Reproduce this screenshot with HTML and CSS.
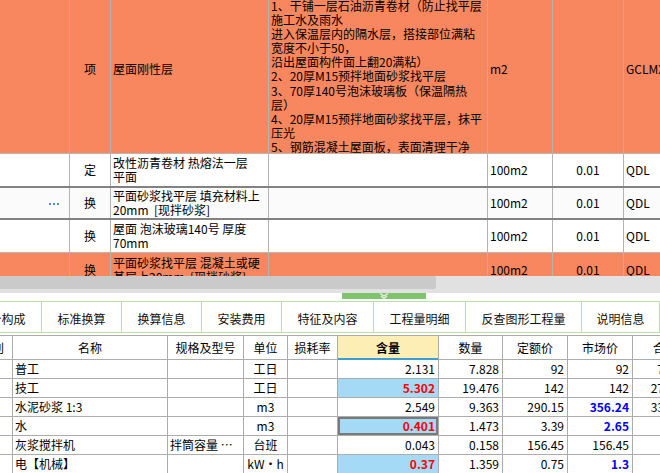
FILE: index.html
```html
<!DOCTYPE html>
<html lang="zh">
<head>
<meta charset="utf-8">
<title>清单组价</title>
<link rel="stylesheet" href="styles.css">
</head>
<body>
<div class="screen">
  <div class="top-grid">
    <div class="top-inner">
      <div class="trow r1 hl">
        <div class="c"></div>
        <div class="c ctr">项</div>
        <div class="c">屋面刚性层</div>
        <div class="c desc">1、干铺一层石油沥青卷材（防止找平层<br>施工水及雨水<br>进入保温层内的隔水层，搭接部位满粘<br>宽度不小于50，<br>沿出屋面构件面上翻20满粘）<br>2、20厚M15预拌地面砂浆找平层<br>3、70厚140号泡沫玻璃板（保温隔热<br>层）<br>4、20厚M15预拌地面砂浆找平层，抹平<br>压光<br>5、钢筋混凝土屋面板，表面清理干净</div>
        <div class="c">m2</div>
        <div class="c"></div>
        <div class="c">GCLMXH</div>
      </div>
      <div class="trow r2 thick">
        <div class="c"></div>
        <div class="c ctr">定</div>
        <div class="c">改性沥青卷材 热熔法一层<br>平面</div>
        <div class="c"></div>
        <div class="c">100m2</div>
        <div class="c ctr">0.01</div>
        <div class="c">QDL</div>
      </div>
      <div class="trow r3 thick alt">
        <div class="c end"><svg class="dots" width="10" height="2" viewBox="0 0 10 2"><rect x="0" y="0" width="2" height="2"/><rect x="4" y="0" width="2" height="2"/><rect x="8" y="0" width="2" height="2"/></svg></div>
        <div class="c ctr">换</div>
        <div class="c">平面砂浆找平层 填充材料上<br>20mm&nbsp;&nbsp;[现拌砂浆]</div>
        <div class="c"></div>
        <div class="c">100m2</div>
        <div class="c ctr">0.01</div>
        <div class="c">QDL</div>
      </div>
      <div class="trow r4">
        <div class="c"></div>
        <div class="c ctr">换</div>
        <div class="c">屋面 泡沫玻璃140号 厚度<br>70mm</div>
        <div class="c"></div>
        <div class="c">100m2</div>
        <div class="c ctr">0.01</div>
        <div class="c">QDL</div>
      </div>
      <div class="trow r5 hl">
        <div class="c"></div>
        <div class="c ctr">换</div>
        <div class="c">平面砂浆找平层 混凝土或硬<br>基层上20mm&nbsp;&nbsp;[现拌砂浆]</div>
        <div class="c"></div>
        <div class="c">100m2</div>
        <div class="c ctr">0.01</div>
        <div class="c">QDL</div>
      </div>
    </div>
  </div>

  <div class="hscroll"><div class="thumb"></div></div>

  <div class="splitter">
    <div class="grip">
      <svg width="10" height="6" viewBox="0 0 10 6"><polyline points="1,0.5 5,3 9,0.5" fill="none" stroke="#e8f5e2" stroke-width="1.2"/><polyline points="2,3 5,5.5 8,3" fill="none" stroke="#e8f5e2" stroke-width="1.2"/></svg>
    </div>
  </div>

  <div class="tabs-wrap">
    <div class="tabs">
      <div class="tab w80">单价构成</div>
      <div class="tab w80">标准换算</div>
      <div class="tab w80">换算信息</div>
      <div class="tab w80">安装费用</div>
      <div class="tab w92">特征及内容</div>
      <div class="tab w92">工程量明细</div>
      <div class="tab w116">反查图形工程量</div>
      <div class="tab w78">说明信息</div>
      <div class="tab w80">组价方案</div>
    </div>
  </div>

  <div class="bottom-grid">
    <div class="btable">
      <div class="brow bhead">
        <div class="b ctr">类别</div>
        <div class="b ctr">名称</div>
        <div class="b ctr">规格及型号</div>
        <div class="b ctr">单位</div>
        <div class="b ctr">损耗率</div>
        <div class="b ctr sorted">含量</div>
        <div class="b ctr">数量</div>
        <div class="b ctr">定额价</div>
        <div class="b ctr">市场价</div>
        <div class="b ctr">合价</div>
        <div class="b ctr">是否暂估</div>
      </div>
      <div class="brow">
        <div class="b ctr">人</div>
        <div class="b">普工</div>
        <div class="b"></div>
        <div class="b ctr">工日</div>
        <div class="b"></div>
        <div class="b num">2.131</div>
        <div class="b num">7.828</div>
        <div class="b num">92</div>
        <div class="b num">92</div>
        <div class="b num">720.18</div>
        <div class="b"></div>
      </div>
      <div class="brow">
        <div class="b ctr">人</div>
        <div class="b">技工</div>
        <div class="b"></div>
        <div class="b ctr">工日</div>
        <div class="b"></div>
        <div class="b num edited">5.302</div>
        <div class="b num">19.476</div>
        <div class="b num">142</div>
        <div class="b num">142</div>
        <div class="b num">2765.59</div>
        <div class="b"></div>
      </div>
      <div class="brow">
        <div class="b ctr">浆</div>
        <div class="b">水泥砂浆 1:3</div>
        <div class="b"></div>
        <div class="b ctr">m3</div>
        <div class="b"></div>
        <div class="b num">2.549</div>
        <div class="b num">9.363</div>
        <div class="b num">290.15</div>
        <div class="b num price">356.24</div>
        <div class="b num">3335.47</div>
        <div class="b"></div>
      </div>
      <div class="brow">
        <div class="b ctr">材</div>
        <div class="b">水</div>
        <div class="b"></div>
        <div class="b ctr">m3</div>
        <div class="b"></div>
        <div class="b num edited selected">0.401</div>
        <div class="b num">1.473</div>
        <div class="b num">3.39</div>
        <div class="b num price">2.65</div>
        <div class="b num">3.9</div>
        <div class="b"></div>
      </div>
      <div class="brow">
        <div class="b ctr">机</div>
        <div class="b">灰浆搅拌机</div>
        <div class="b">拌筒容量 ⋯</div>
        <div class="b ctr">台班</div>
        <div class="b"></div>
        <div class="b num">0.043</div>
        <div class="b num">0.158</div>
        <div class="b num">156.45</div>
        <div class="b num">156.45</div>
        <div class="b num">24.72</div>
        <div class="b"></div>
      </div>
      <div class="brow">
        <div class="b ctr">机</div>
        <div class="b">电【机械】</div>
        <div class="b"></div>
        <div class="b ctr">kW·h</div>
        <div class="b"></div>
        <div class="b num edited">0.37</div>
        <div class="b num">1.359</div>
        <div class="b num">0.75</div>
        <div class="b num price">1.3</div>
        <div class="b num">1.77</div>
        <div class="b"></div>
      </div>
    </div>
  </div>
</div>
</body>
</html>
```

FILE: styles.css
```css
* {
  box-sizing: border-box;
  margin: 0;
  padding: 0;
}

html, body {
  margin: 0;
  width: 660px;
  height: 473px;
  overflow: hidden;
  background: #ffffff;
}

body {
  font-family: "Noto Sans CJK SC", "Liberation Sans", sans-serif;
  font-size: 12px;
  color: #000;
}

.screen {
  width: 660px;
  height: 473px;
  overflow: hidden;
  display: flex;
  flex-direction: column;
}

/* ---------- top grid ---------- */
.top-grid {
  height: 276px;
  flex: none;
  overflow: hidden;
}

.top-inner {
  margin-top: -15px;
}

.trow {
  display: grid;
  grid-template-columns: 70px 41px 158px 219px 65px 71px 80px;
  border-bottom: 1px solid #b6b6b6;
  background: #ffffff;
}

.trow.thick {
  border-bottom: 2px solid #828282;
}

.trow.alt {
  background: #fbfbfb;
}

.trow.hl {
  background: #f8875f;
}

.r1 { height: 169px; }
.r2 { height: 34px; }
.r3 { height: 32px; }
.r4 { height: 33px; }
.r5 { height: 34px; }

.c {
  border-right: 1px solid #b4b4b4;
  display: flex;
  align-items: center;
  overflow: hidden;
  white-space: nowrap;
  line-height: 14px;
  padding-left: 2px;
}

.c.ctr {
  justify-content: center;
  padding-left: 0;
}

.c.end {
  justify-content: flex-end;
  padding-right: 10px;
}

.c.desc {
  align-items: flex-start;
  padding-top: 14px;
  line-height: 14.1px;
}

.dots {
  fill: #4a8fd6;
  margin-top: 1px;
}

/* ---------- scrollbar & splitter ---------- */
.hscroll {
  height: 17px;
  flex: none;
  background: #e1e1e1;
}

.hscroll .thumb {
  width: 436px;
  height: 13px;
  background: #cacaca;
  border-radius: 0 2px 2px 0;
}

.splitter {
  height: 8px;
  flex: none;
}

.grip {
  margin-left: 342px;
  width: 84px;
  height: 6px;
  background: #7fc46c;
  display: flex;
  justify-content: center;
  align-items: flex-start;
}

.grip svg {
  display: block;
}

/* ---------- tabs ---------- */
.tabs-wrap {
  height: 32px;
  flex: none;
  overflow: hidden;
  border-top: 1px solid #b9e0a8;
  border-bottom: 1px solid #b9e0a8;
}

.tabs {
  display: flex;
  margin-left: -38px;
  height: 100%;
}

.tab {
  flex: none;
  height: 100%;
  border-right: 1px solid #b9e0a8;
  display: flex;
  align-items: center;
  justify-content: center;
  padding-top: 2px;
  white-space: nowrap;
  font-size: 12px;
  color: #111;
}

.w78 { width: 78px; }
.w80 { width: 80px; }
.w92 { width: 92px; }
.w116 { width: 116px; }

/* ---------- bottom grid ---------- */
.bottom-grid {
  margin-top: 2px;
  flex: 1;
  overflow: hidden;
}

.btable {
  margin-left: -28px;
}

.brow {
  display: grid;
  grid-template-columns: 41px 155px 76px 44px 50px 101px 64px 65px 65px 65px 70px;
  height: 19px;
  border-bottom: 1px solid #acacac;
}

.brow.bhead {
  height: 25px;
  border-top: 1px solid #acacac;
}

.b {
  border-right: 1px solid #acacac;
  display: flex;
  align-items: center;
  overflow: hidden;
  white-space: nowrap;
  padding-left: 2px;
  line-height: 14px;
}

.b.ctr {
  justify-content: center;
  padding-left: 0;
}

.b.num {
  justify-content: flex-end;
  padding-left: 0;
  padding-right: 3px;
}

.b.sorted {
  background: #fdeeb5;
  font-weight: bold;
  box-shadow: inset 0 -2px 0 #3b9fd6;
  margin-bottom: -1px;
}

.b.edited {
  background: #a4daf6;
  color: #ff0000;
  font-weight: bold;
}

.b.selected {
  box-shadow: inset 0 0 0 2px #7a7a7a;
}

.b.price {
  color: #0000ee;
  font-weight: bold;
}
```
